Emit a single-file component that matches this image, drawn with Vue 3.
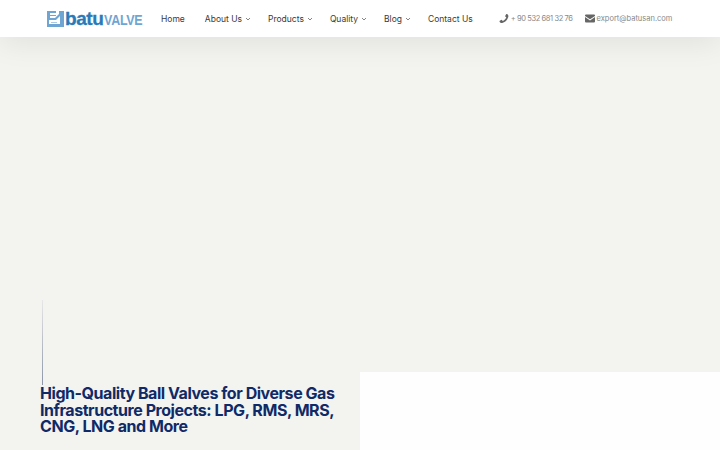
<template>
  <div class="page">
    <header class="topbar">
      <a class="logo" href="#">
        <svg class="logo-mark" viewBox="0 0 17 16" aria-hidden="true">
          <path fill="#6fa5d2" d="M0 0h9v2H3v2h6v1H3v2h5L12 3V0h5v16H0z" />
          <path fill="#fff" d="M2 9h7l4-4v8H2z" />
          <path fill="#a9c9e4" d="M4 11h6v1H4z" />
        </svg>
        <span class="logo-batu">batu</span><span class="logo-valve">VALVE</span>
      </a>
      <nav class="nav">
        <a v-for="item in navItems" :key="item.label" class="nav-link" :class="{ 'no-sub': !item.sub }" href="#">
          {{ item.label }}
          <svg v-if="item.sub" class="chevron" viewBox="0 0 8 8" aria-hidden="true">
            <path d="M2 3l2 2 2-2" fill="none" stroke="currentColor" stroke-width="0.8" />
          </svg>
        </a>
      </nav>
      <div class="contact">
        <span class="contact-item phone">
          <svg class="contact-icon flip" viewBox="0 0 1408 1408" aria-hidden="true">
            <path fill="currentColor" d="M1408 1112q0 27-10 70.500t-21 68.500q-21 50-122 106-94 51-186 51-27 0-53-3.500t-57.500-12.500-47-14.500-55.500-20.500-49-18q-98-35-175-83-127-79-264-216T171 776q-48-77-83-175-3-9-18-49t-20.500-55.500T35 449t-12.500-57.500T19 338q0-92 51-186Q126 51 176 30q25-11 68.500-21T315 0q14 0 21 3 18 6 53 76 11 19 30 54t35 63.500 31 53.500q3 4 17.500 25t21.500 35.500 7 28.500q0 20-28.500 50t-62 55-62 53-28.500 46q0 9 5 22.500t8.500 20.500 14 24 11.500 19q76 137 174 235t235 174q2 1 19 11.500t24 14 20.500 8.500 22.500 5q18 0 46-28.500t53-62 55-62 50-28.500q14 0 28.500 7t35.500 21.500 25 17.500q25 15 53.500 31t63.500 35 54 30q70 35 76 53 3 7 3 21z" />
          </svg>
          + 90 532 681 32 76
        </span>
        <span class="contact-item email">
          <svg class="contact-icon" viewBox="0 0 20 16" aria-hidden="true">
            <path fill="currentColor" d="M2 0h16a2 2 0 0 1 2 2v1l-10 6.500L0 3V2a2 2 0 0 1 2-2z" />
            <path fill="currentColor" d="M0 5.200 10 11.800l10-6.600V14a2 2 0 0 1-2 2H2a2 2 0 0 1-2-2z" />
          </svg>
          export@batusan.com
        </span>
      </div>
    </header>

    <main class="hero">
      <section class="hero-left">
        <div class="scroll-line"></div>
        <h1 class="title">High-Quality Ball Valves for Diverse Gas Infrastructure Projects: LPG, RMS, MRS, CNG, LNG and More</h1>
      </section>
      <section class="hero-panel"></section>
    </main>
  </div>
</template>

<script setup>
const navItems = [
  { label: 'Home', sub: false },
  { label: 'About Us', sub: true },
  { label: 'Products', sub: true },
  { label: 'Quality', sub: true },
  { label: 'Blog', sub: true },
  { label: 'Contact Us', sub: false }
]
</script>

<style>
html,
body {
  margin: 0;
  overflow: hidden;
}
</style>

<style scoped>
.page {
  width: 720px;
  height: 450px;
  overflow: hidden;
  display: flex;
  flex-direction: column;
  background: #f3f3f0;
  font-family: Inter, "Noto Sans", sans-serif;
}

.topbar {
  height: 37px;
  flex-shrink: 0;
  display: flex;
  align-items: center;
  padding-left: 47px;
  background: #fff;
  box-shadow: 0 6px 30px rgba(0, 0, 0, 0.08);
  position: relative;
}

.logo {
  width: 114px;
  flex-shrink: 0;
  display: flex;
  align-items: center;
  text-decoration: none;
  font-family: "Liberation Sans", sans-serif;
  font-weight: 700;
  line-height: 1;
}

.logo-mark {
  width: 17px;
  height: 16px;
  margin-right: 1px;
}

.logo-batu {
  font-size: 19px;
  letter-spacing: -0.4px;
  color: #2a7ab8;
  -webkit-text-stroke: 0.3px #2a7ab8;
}

.logo-valve {
  display: inline-block;
  font-size: 14.500px;
  letter-spacing: -0.3px;
  color: #6fa5d2;
  margin-top: 3px;
  transform: scaleX(0.86);
  transform-origin: left;
}

.nav {
  display: flex;
  align-items: center;
  gap: 16px;
}

.nav-link {
  display: flex;
  align-items: center;
  gap: 2px;
  font-size: 8.500px;
  font-weight: 400;
  color: #3a3a3a;
  text-decoration: none;
  white-space: nowrap;
}

.nav-link.no-sub {
  padding-right: 4px;
}

.chevron {
  width: 8px;
  height: 8px;
  color: #666;
}

.contact {
  display: flex;
  gap: 12px;
  margin-left: 22px;
}

.contact-item {
  display: flex;
  align-items: center;
  gap: 2px;
  font-size: 7.500px;
  color: #888;
  white-space: nowrap;
}

.phone {
  letter-spacing: -0.4px;
}

.email {
  letter-spacing: 0;
}

.contact-icon {
  width: 10px;
  height: 9px;
  color: #666;
}

.flip {
  transform: scaleX(-1);
}

.hero {
  flex: 1;
  display: flex;
  min-height: 0;
}

.hero-left {
  width: 360px;
  flex-shrink: 0;
  box-sizing: border-box;
  padding: 263px 0 0 40px;
}

.scroll-line {
  width: 1px;
  height: 85px;
  margin-left: 2px;
  background: linear-gradient(to bottom, #e6e7e8, #8e97a8);
}

.title {
  width: 300px;
  margin: 0;
  font-size: 16px;
  line-height: 16.700px;
  letter-spacing: -0.45px;
  font-weight: 700;
  color: #0f2a66;
}

.hero-panel {
  flex: 1;
  margin-top: 335px;
  background: #fefefe;
}
</style>
